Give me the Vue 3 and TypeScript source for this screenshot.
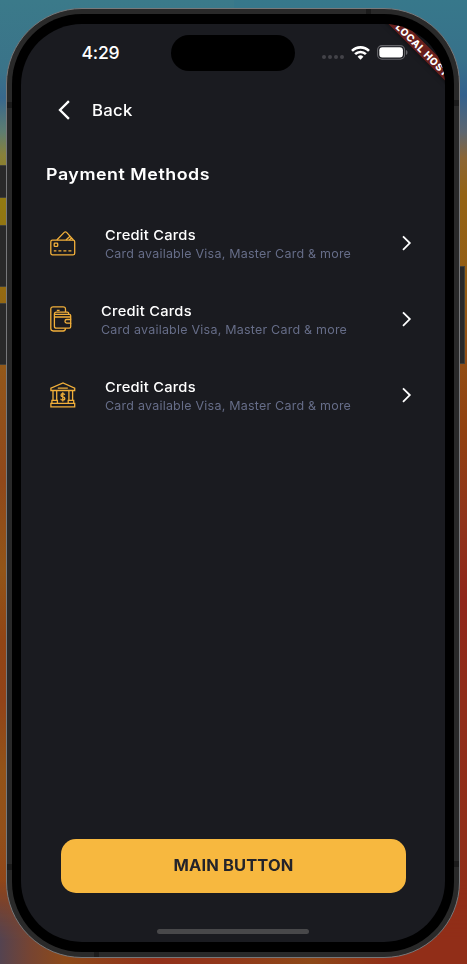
<script setup lang="ts">
type IconName = 'card' | 'wallet' | 'bank'

interface PaymentMethod {
  id: number
  icon: IconName
  title: string
  detail: string
}

const methods: PaymentMethod[] = [
  { id: 1, icon: 'card', title: 'Credit Cards', detail: 'Card available Visa, Master Card & more' },
  { id: 2, icon: 'wallet', title: 'Credit Cards', detail: 'Card available Visa, Master Card & more' },
  { id: 3, icon: 'bank', title: 'Credit Cards', detail: 'Card available Visa, Master Card & more' },
]
</script>

<template>
  <div class="desktop">
    <div class="wall wall-right"></div>
    <div class="wall wall-bottom"></div>
    <i class="key key-mute"></i>
    <i class="key key-up"></i>
    <i class="key key-down"></i>
    <i class="key key-power"></i>

    <div class="phone">
      <i class="band band-top"></i>
      <i class="band band-bottom"></i>
      <i class="band band-lt"></i>
      <i class="band band-rt"></i>
      <i class="band band-lb"></i>
      <i class="band band-rb"></i>
      <div class="bezel">
        <div class="screen">
          <header class="status">
            <span class="clock">4:29</span>
            <div class="indicators">
              <svg class="signal" width="22" height="4" viewBox="0 0 22 4" fill="#434348">
                <circle cx="2" cy="2" r="2" /><circle cx="8" cy="2" r="2" />
                <circle cx="14" cy="2" r="2" /><circle cx="20" cy="2" r="2" />
              </svg>
              <svg class="wifi" width="19" height="14" viewBox="0 0 19 14" fill="none" stroke="#fff" stroke-width="2.6">
                <path d="M1 4.9a12.1 12.1 0 0 1 17 0" />
                <path d="M4.1 8.2a7.6 7.6 0 0 1 10.8 0" />
                <path d="M6.6 10.8a4.1 4.1 0 0 1 5.8 0L9.5 13.8z" fill="#fff" stroke="none" />
              </svg>
              <svg class="battery" width="31" height="15" viewBox="0 0 31 15">
                <rect x=".6" y=".6" width="27" height="13.6" rx="4.4" fill="none" stroke="#66666b" stroke-width="1.1" />
                <rect x="2.3" y="2.3" width="23.6" height="10.2" rx="3" fill="#fff" />
                <path d="M29 5v5c2-.8 2-4.2 0-5z" fill="#66666b" />
              </svg>
            </div>
          </header>
          <div class="island"></div>
          <div class="banner">LOCAL HOST</div>

          <nav class="back">
            <svg width="12" height="20" viewBox="0 0 12 20" fill="none" stroke="#fff" stroke-width="2.3">
              <path d="M10.9 1.1 2 10l8.9 8.9" />
            </svg>
            <span>Back</span>
          </nav>

          <main class="content">
            <h1>Payment Methods</h1>
            <ul class="methods">
              <li v-for="method in methods" :key="method.id" class="method">
                <svg v-if="method.icon === 'card'" class="icon" width="26" height="26" viewBox="0 0 26 26">
                  <rect x=".8" y="10.2" width="23.9" height="14.6" rx="1.6" />
                  <path d="m6.8 10 7.4-7.6q1.2-1.2 2.4 0l6.8 7.6M16 10l4-3.8M19.3 10l2.4-2.2" />
                  <rect x="4.2" y="13.2" width="3.5" height="3.2" rx=".7" />
                  <path d="M3.8 20.8h2.6m2 0h3m2 0h3m2 0h3" />
                </svg>
                <svg v-else-if="method.icon === 'wallet'" class="icon" width="22" height="26" viewBox="0 0 22 26">
                  <path d="M15.5 6V3.2Q15.5.8 13.1.8H3.2Q.8.8.8 3.2v19.4Q.8 25 3.2 25h9.9q2.4 0 2.4-2.7" />
                  <path d="M6.8 4.4h2.8" />
                  <path d="M20.7 13.5V9.7q0-1.4-1.4-1.4H4.4q0-2.1 2-2.1h10.8q1.6 0 1.6 2.1M4.4 8.3v11.9q0 2 2 2h12.9q1.4 0 1.4-1.4v-3.7M4.7 11h15.8" />
                  <path d="M20.7 13.5h-3.9a1.8 1.8 0 0 0 0 3.6h3.9z" />
                </svg>
                <svg v-else class="icon" width="26" height="26" viewBox="0 0 26 26">
                  <path d="M.9 8.5V6.1L13 .9l11.7 5.2v2.4zM7.8 6.2h10" />
                  <path d="M3 8.5v9.8M6.7 8.5v9.8M18.9 8.5v9.8M22.6 8.5v9.8" />
                  <path d="M1.9 21.4v-3.1h5.5v3.1M18.2 21.4v-3.1h5.5v3.1M.9 21.4h23.8v3.4H.9z" />
                  <path d="M14.7 12.8q-.3-1.2-1.9-1.2-1.8 0-1.8 1.6 0 1.2 1.8 1.5 2 .4 2 1.9 0 1.6-2 1.6t-2-1.5M12.8 10.2v9.2" />
                </svg>
                <div class="copy">
                  <strong>{{ method.title }}</strong>
                  <span>{{ method.detail }}</span>
                </div>
                <svg class="chevron" width="10" height="16" viewBox="0 0 10 16" fill="none" stroke="#fff" stroke-width="1.8">
                  <path d="m1 1.3 6.8 6.8L1 14.9" />
                </svg>
              </li>
            </ul>
          </main>

          <footer class="actions">
            <button type="button"><span>MAIN BUTTON</span></button>
            <div class="home-bar"></div>
          </footer>
        </div>
      </div>
    </div>
  </div>
</template>

<style>
body {
  overflow: hidden;
  background: #8f4a16;
}
</style>

<style scoped>
* {
  box-sizing: border-box;
}

.desktop {
  position: relative;
  width: 467px;
  height: 964px;
  padding: 8px 0 0 6px;
  overflow: hidden;
  font-family: Inter, 'Liberation Sans', sans-serif;
  background: linear-gradient(#3b7a8a 0, #3a7389 70px, #38688d 98px, #5e7d70 132px, #88813a 155px, #927b12 195px, #936a12 290px, #92551a 380px, #90481a 480px, #925518 570px, #914515 640px, #914318 700px, #925318 770px, #92501a 830px, #914318 900px, #704038 964px);
}

.wall {
  position: absolute;
  inset: 0;
}

.wall-right {
  left: 234px;
  background: linear-gradient(#37788b 0, #37718a 60px, #33618d 95px, #5d6670 132px, #8b6534 158px, #946313 195px, #935c14 290px, #924f14 350px, #91400f 430px, #90331a 520px, #902519 600px, #902c18 700px, #912e18 964px);
}

.wall-bottom {
  top: 880px;
  background: linear-gradient(90deg, #544350 0, #764432 30px, #8d4a19 65px, #92301a 155px, #92381a 230px, #8d4817 310px, #912e18 390px, #912e18);
  mask-image: linear-gradient(transparent, #000 60px);
}

.key {
  position: absolute;
  left: -2px;
  width: 9px;
  background: #292929;
  border: 1px solid #40403a;
}

.key-mute { top: 165px; height: 33px; }
.key-up { top: 225px; height: 62px; }
.key-down { top: 303px; height: 62px; }
.key-power { top: 266px; left: 458px; width: 7px; height: 98px; }

.phone {
  position: relative;
  width: 454px;
  height: 950px;
  padding: 5px;
  background: #292929;
  border: 1px solid #77787a;
  border-radius: 76px;
}

.band {
  position: absolute;
  width: 5px;
  height: 6px;
  background: #1b1b1b;
}

.band-top { top: 0; left: 359px; }
.band-bottom { bottom: 0; left: 87px; }
.band-lt { top: 93px; left: 0; }
.band-rt { top: 91px; right: 0; }
.band-lb { top: 855px; left: 0; }
.band-rb { top: 852px; right: 0; }

.bezel {
  position: relative;
  height: 100%;
  padding: 10px 9px;
  background: #000;
  border-radius: 70px;
}

.screen {
  position: relative;
  display: flex;
  flex-direction: column;
  height: 918px;
  overflow: hidden;
  color: #fff;
  background: #1a1b20;
  border-radius: 61px;
}

.status {
  display: flex;
  align-items: center;
  justify-content: space-between;
  height: 57px;
  padding: 0 37px 0 60.5px;
}

.clock {
  font-size: 17.6px;
  font-weight: 500;
  letter-spacing: -0.2px;
}

.indicators {
  display: flex;
  align-items: center;
  gap: 7px;
}

.signal {
  margin-top: 9px;
}

.island {
  position: absolute;
  top: 11px;
  left: 150px;
  width: 124px;
  height: 36px;
  background: #000;
  border-radius: 18px;
}

.banner {
  position: absolute;
  top: 18px;
  left: 350px;
  width: 100px;
  height: 12px;
  font-size: 10px;
  font-weight: 800;
  line-height: 12px;
  letter-spacing: 0.6px;
  text-indent: 5px;
  text-align: center;
  background: #681f1c;
  box-shadow: 0 0 5px #0008;
  transform: rotate(45deg);
}

.back {
  display: flex;
  align-items: center;
  gap: 22px;
  height: 57px;
  padding-left: 37px;
  font-size: 15.5px;
  font-weight: 500;
  letter-spacing: 0.25px;
}

.back span,
h1,
.copy strong {
  transform: scaleX(1.08);
  transform-origin: left;
}

.back span {
  padding-top: 2px;
}

.content {
  flex: 1;
  padding: 24px 33px 0 25px;
}

h1 {
  margin: 0;
  font-size: 16.5px;
  font-weight: 600;
  line-height: 24px;
  letter-spacing: 0.5px;
}

.methods {
  margin: 19px 0 0;
  padding: 0 0 0 4px;
  list-style: none;
}

.method {
  display: flex;
  align-items: center;
  height: 76px;
}

.icon {
  flex: none;
  margin-right: 29px;
  fill: none;
  stroke: #f2b03a;
  stroke-width: 1.3;
}

.copy {
  display: flex;
  flex: 1;
  flex-direction: column;
  padding-top: 2px;
  white-space: nowrap;
}

.copy strong {
  font-size: 13.6px;
  font-weight: 500;
  line-height: 19px;
  letter-spacing: 0.22px;
}

.copy span {
  font-size: 12px;
  line-height: 18px;
  letter-spacing: 0.22px;
  color: #666d88;
  transform: scaleX(1.04);
  transform-origin: left;
}

.actions {
  display: flex;
  flex-direction: column;
  align-items: center;
  height: 103px;
}

button {
  width: 345px;
  height: 54px;
  padding: 0;
  font: 700 15.7px Inter, sans-serif;
  letter-spacing: 0.15px;
  color: #23232a;
  background: #f7b83f;
  border: 0;
  border-radius: 15px;
}

button span {
  display: block;
  padding-bottom: 1px;
  transform: scaleX(1.05);
}

.home-bar {
  width: 152px;
  height: 5px;
  margin-top: 36px;
  background: #48484a;
  border-radius: 3px;
}
</style>
